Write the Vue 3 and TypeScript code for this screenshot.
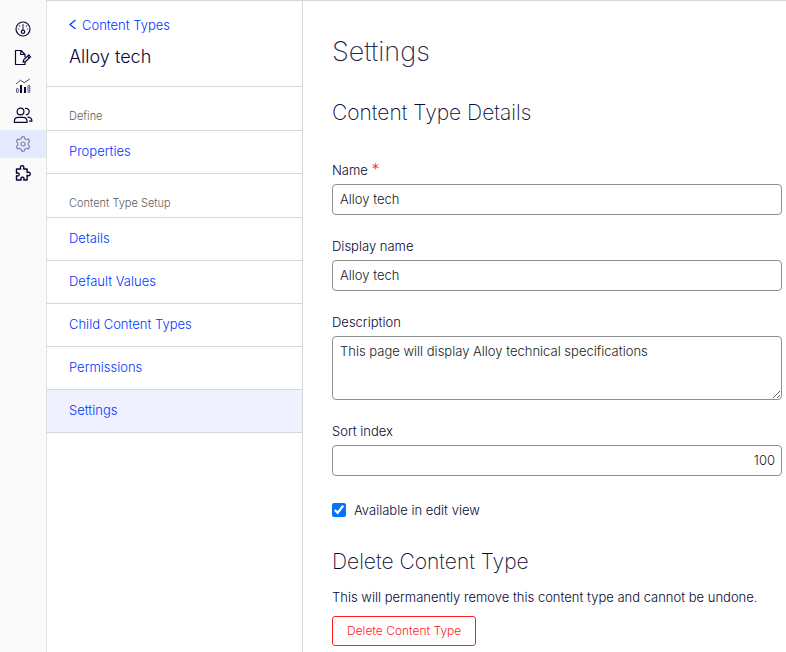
<script setup lang="ts">
import { ref } from 'vue'

interface NavSection {
  title: string
  items: string[]
}

const sections: NavSection[] = [
  { title: 'Define', items: ['Properties'] },
  {
    title: 'Content Type Setup',
    items: ['Details', 'Default Values', 'Child Content Types', 'Permissions', 'Settings'],
  },
]

const activeItem = ref('Settings')
const name = ref('Alloy tech')
const displayName = ref('Alloy tech')
const description = ref('This page will display Alloy technical specifications')
const sortIndex = ref('100')
const available = ref(true)
</script>

<template>
  <div class="app">
    <nav class="rail" aria-label="Main">
      <a href="#" class="rail-item" aria-label="Dashboard">
        <svg viewBox="0 0 18 18" class="icon">
          <circle cx="9" cy="10" r="7" />
          <circle cx="9" cy="12.8" r="1.7" />
          <path d="M9 5v6" class="thick" />
          <path d="M4.2 10h1M12.8 10h1M5.3 6.6l.8.8M12.7 6.6l-.8.8" />
        </svg>
      </a>
      <a href="#" class="rail-item" aria-label="Content">
        <svg viewBox="0 0 18 18" class="icon">
          <path d="M11 13.8v2.7H1.5v-14H7l4 4v3M6.8 2.7v3.8H11" />
          <path d="M9 14.2l.8-2.6 5-4.6 1.8 1.8-5 4.7z" />
          <path d="M13.5 8.2l1.7 1.8" />
        </svg>
      </a>
      <a href="#" class="rail-item" aria-label="Reports">
        <svg viewBox="0 0 18 18" class="icon">
          <path d="M2 7l4.5-3.8 3.7 2.5L15.8 2" class="thin" />
          <rect x="2.5" y="11.5" width="1.8" height="4" rx=".8" class="thin" />
          <rect x="6" y="8" width="2" height="8" class="solid" />
          <rect x="10" y="10" width="2" height="6" class="solid" />
          <rect x="14" y="8.5" width="1.8" height="7" rx=".8" class="thin" />
        </svg>
      </a>
      <a href="#" class="rail-item" aria-label="Users">
        <svg viewBox="0 0 20 18" class="icon wide">
          <circle cx="7.5" cy="5.5" r="3.4" />
          <path d="M1.4 16.4v-1.3c0-2.5 1.8-3.7 4-3.7H10c2.2 0 4 1.2 4 3.7v1.3z" />
          <path d="M12 2.5c2.4-.6 4.2.9 4.2 3s-1.7 3.4-3.4 3.2M14.5 11.2c2.8 0 4.4 1.5 4.4 4H16" />
        </svg>
      </a>
      <a href="#" class="rail-item active" aria-label="Settings">
        <svg viewBox="0 0 18 18" class="icon">
          <path
            d="M7.7 1.8h2.6l.5 2 1.5.9 2.1-.6 1.3 2.3-1.5 1.5v2.2l1.5 1.5-1.3 2.3-2.1-.6-1.5.9-.5 2H7.7l-.5-2-1.5-.9-2.1.6-1.3-2.3 1.5-1.5V7.9L2.3 6.4l1.3-2.3 2.1.6 1.5-.9z"
          />
          <circle cx="9" cy="9" r="2" />
        </svg>
      </a>
      <a href="#" class="rail-item" aria-label="Add-ons">
        <svg viewBox="0 0 18 18" class="icon bold">
          <path
            d="M2.5 5h4.2c-1-1.9.1-3.4 1.4-3.4S10.5 3.1 9.5 5h3.6v3.5c1.9-.8 3.2.1 3.2 1.4s-1.3 2.4-3.2 1.4V16H9.7c.9-1.4.2-2.8-1.2-2.8S6.3 14.600 7.200 16H2.500v-4.300c1.800.8 2.700-.2 2.700-1.200s-1-2-2.700-1.200z"
          />
        </svg>
      </a>
    </nav>

    <aside class="panel">
      <header class="panel-head">
        <a href="#" class="back">
          <svg viewBox="0 0 8 12" class="chevron"><path d="M6.5 1L1 5.5 6.5 10" /></svg>
          Content Types
        </a>
        <div class="type-name">Alloy tech</div>
      </header>
      <section v-for="section in sections" :key="section.title">
        <h3 class="section-title">{{ section.title }}</h3>
        <a
          v-for="item in section.items"
          :key="item"
          href="#"
          class="nav-link"
          :class="{ active: item === activeItem }"
          @click.prevent="activeItem = item"
          >{{ item }}</a
        >
      </section>
    </aside>

    <main class="content">
      <h1>Settings</h1>
      <h2>Content Type Details</h2>
      <form class="form" @submit.prevent>
        <div class="field">
          <label for="name">Name <span class="required">*</span></label>
          <input id="name" v-model="name" type="text" required />
        </div>
        <div class="field">
          <label for="display-name">Display name</label>
          <input id="display-name" v-model="displayName" type="text" />
        </div>
        <div class="field">
          <label for="description">Description</label>
          <textarea id="description" v-model="description"></textarea>
        </div>
        <div class="field">
          <label for="sort-index">Sort index</label>
          <input id="sort-index" v-model="sortIndex" type="text" inputmode="numeric" class="number" />
        </div>
        <label class="check">
          <input v-model="available" type="checkbox" />
          Available in edit view
        </label>
      </form>
      <h2 class="delete-title">Delete Content Type</h2>
      <p>This will permanently remove this content type and cannot be undone.</p>
      <button type="button" class="danger">Delete Content Type</button>
    </main>
  </div>
</template>

<style>
body {
  margin: 0;
  background: #fff;
}
</style>

<style scoped>
.app {
  display: flex;
  min-height: 100vh;
  font: 300 13px/20px Inter, 'Liberation Sans', sans-serif;
  color: #080736;
}
.app *,
.app {
  box-sizing: border-box;
}
a {
  color: #0037ff;
  text-decoration: none;
}
.rail {
  flex: 0 0 47px;
  display: flex;
  flex-direction: column;
  gap: 1px;
  padding-top: 14px;
  background: #fafafa;
  border-right: 1px solid #e0e0e0;
}
.rail-item {
  display: flex;
  align-items: center;
  justify-content: center;
  height: 28px;
  color: #080736;
}
.rail-item.active {
  background: #e6eaff;
  color: #8386ab;
}
.icon {
  width: 18px;
  height: 18px;
  fill: none;
  stroke: currentColor;
  stroke-width: 1.2;
  stroke-linejoin: round;
}
.icon.wide {
  width: 20px;
}
.icon.bold {
  stroke-width: 1.4;
}
.thick {
  stroke-width: 1.8;
  opacity: 0.5;
}
.thin {
  stroke-width: 0.9;
  opacity: 0.8;
}
.solid {
  fill: currentColor;
  stroke: none;
}
.panel {
  flex: 0 0 256px;
  border-top: 1px solid #d6d6d6;
  border-right: 1px solid #d6d6d6;
}
.panel-head {
  height: 86px;
  padding: 14px 22px 0;
  border-bottom: 1px solid #d6d6d6;
}
.back {
  display: flex;
  align-items: center;
  gap: 5px;
}
.chevron {
  width: 8px;
  height: 12px;
  fill: none;
  stroke: currentColor;
  stroke-width: 1.2;
}
.type-name {
  margin-top: 8px;
  font-size: 18px;
  line-height: 28px;
  font-weight: 300;
}
.section-title {
  height: 44px;
  margin: 0;
  padding: 19px 22px 0;
  border-bottom: 1px solid #d6d6d6;
  color: #606060;
  font-size: 11px;
  line-height: 20px;
  font-weight: 300;
}
.nav-link {
  display: block;
  padding: 10px 22px 12px;
  border-bottom: 1px solid #d6d6d6;
}
.nav-link.active {
  background: #eff1ff;
}
.content {
  flex: 1;
  min-width: 0;
  padding: 35px 4px 6px 29px;
  border-top: 1px solid #d6d6d6;
}
h1 {
  margin: 0;
  color: #2a2950;
  font-size: 27px;
  line-height: 32px;
  font-weight: 200;
}
h2 {
  margin: 31px 0 0;
  font-size: 21px;
  line-height: 28px;
  font-weight: 200;
}
.form {
  display: flex;
  flex-direction: column;
  gap: 21px;
  margin-top: 33px;
}
.field {
  display: flex;
  flex-direction: column;
  gap: 4px;
}
.required {
  color: #ff2b2b;
  font-size: 16px;
  line-height: 16px;
}
input[type='text'],
textarea {
  width: 100%;
  height: 31px;
  padding: 3px 6px 5px 7px;
  border: 1px solid #8f8f8f;
  border-radius: 4px;
  background: #fff;
  color: #1a1a1a;
  font: inherit;
}
textarea {
  display: block;
  height: 64px;
  padding-top: 4px;
  resize: vertical;
}
.number {
  text-align: right;
}
.check {
  display: flex;
  align-items: center;
  gap: 8px;
  margin-top: 3px;
}
.check input {
  width: 14px;
  height: 14px;
  margin: 0;
  accent-color: #0075ff;
}
.delete-title {
  margin-top: 28px;
}
p {
  margin: 11px 0 9px;
}
.danger {
  display: block;
  height: 30px;
  padding: 0 14px;
  border: 1px solid #f22;
  border-radius: 3px;
  background: #fff;
  color: #f22;
  font: inherit;
  font-size: 12px;
}
</style>
